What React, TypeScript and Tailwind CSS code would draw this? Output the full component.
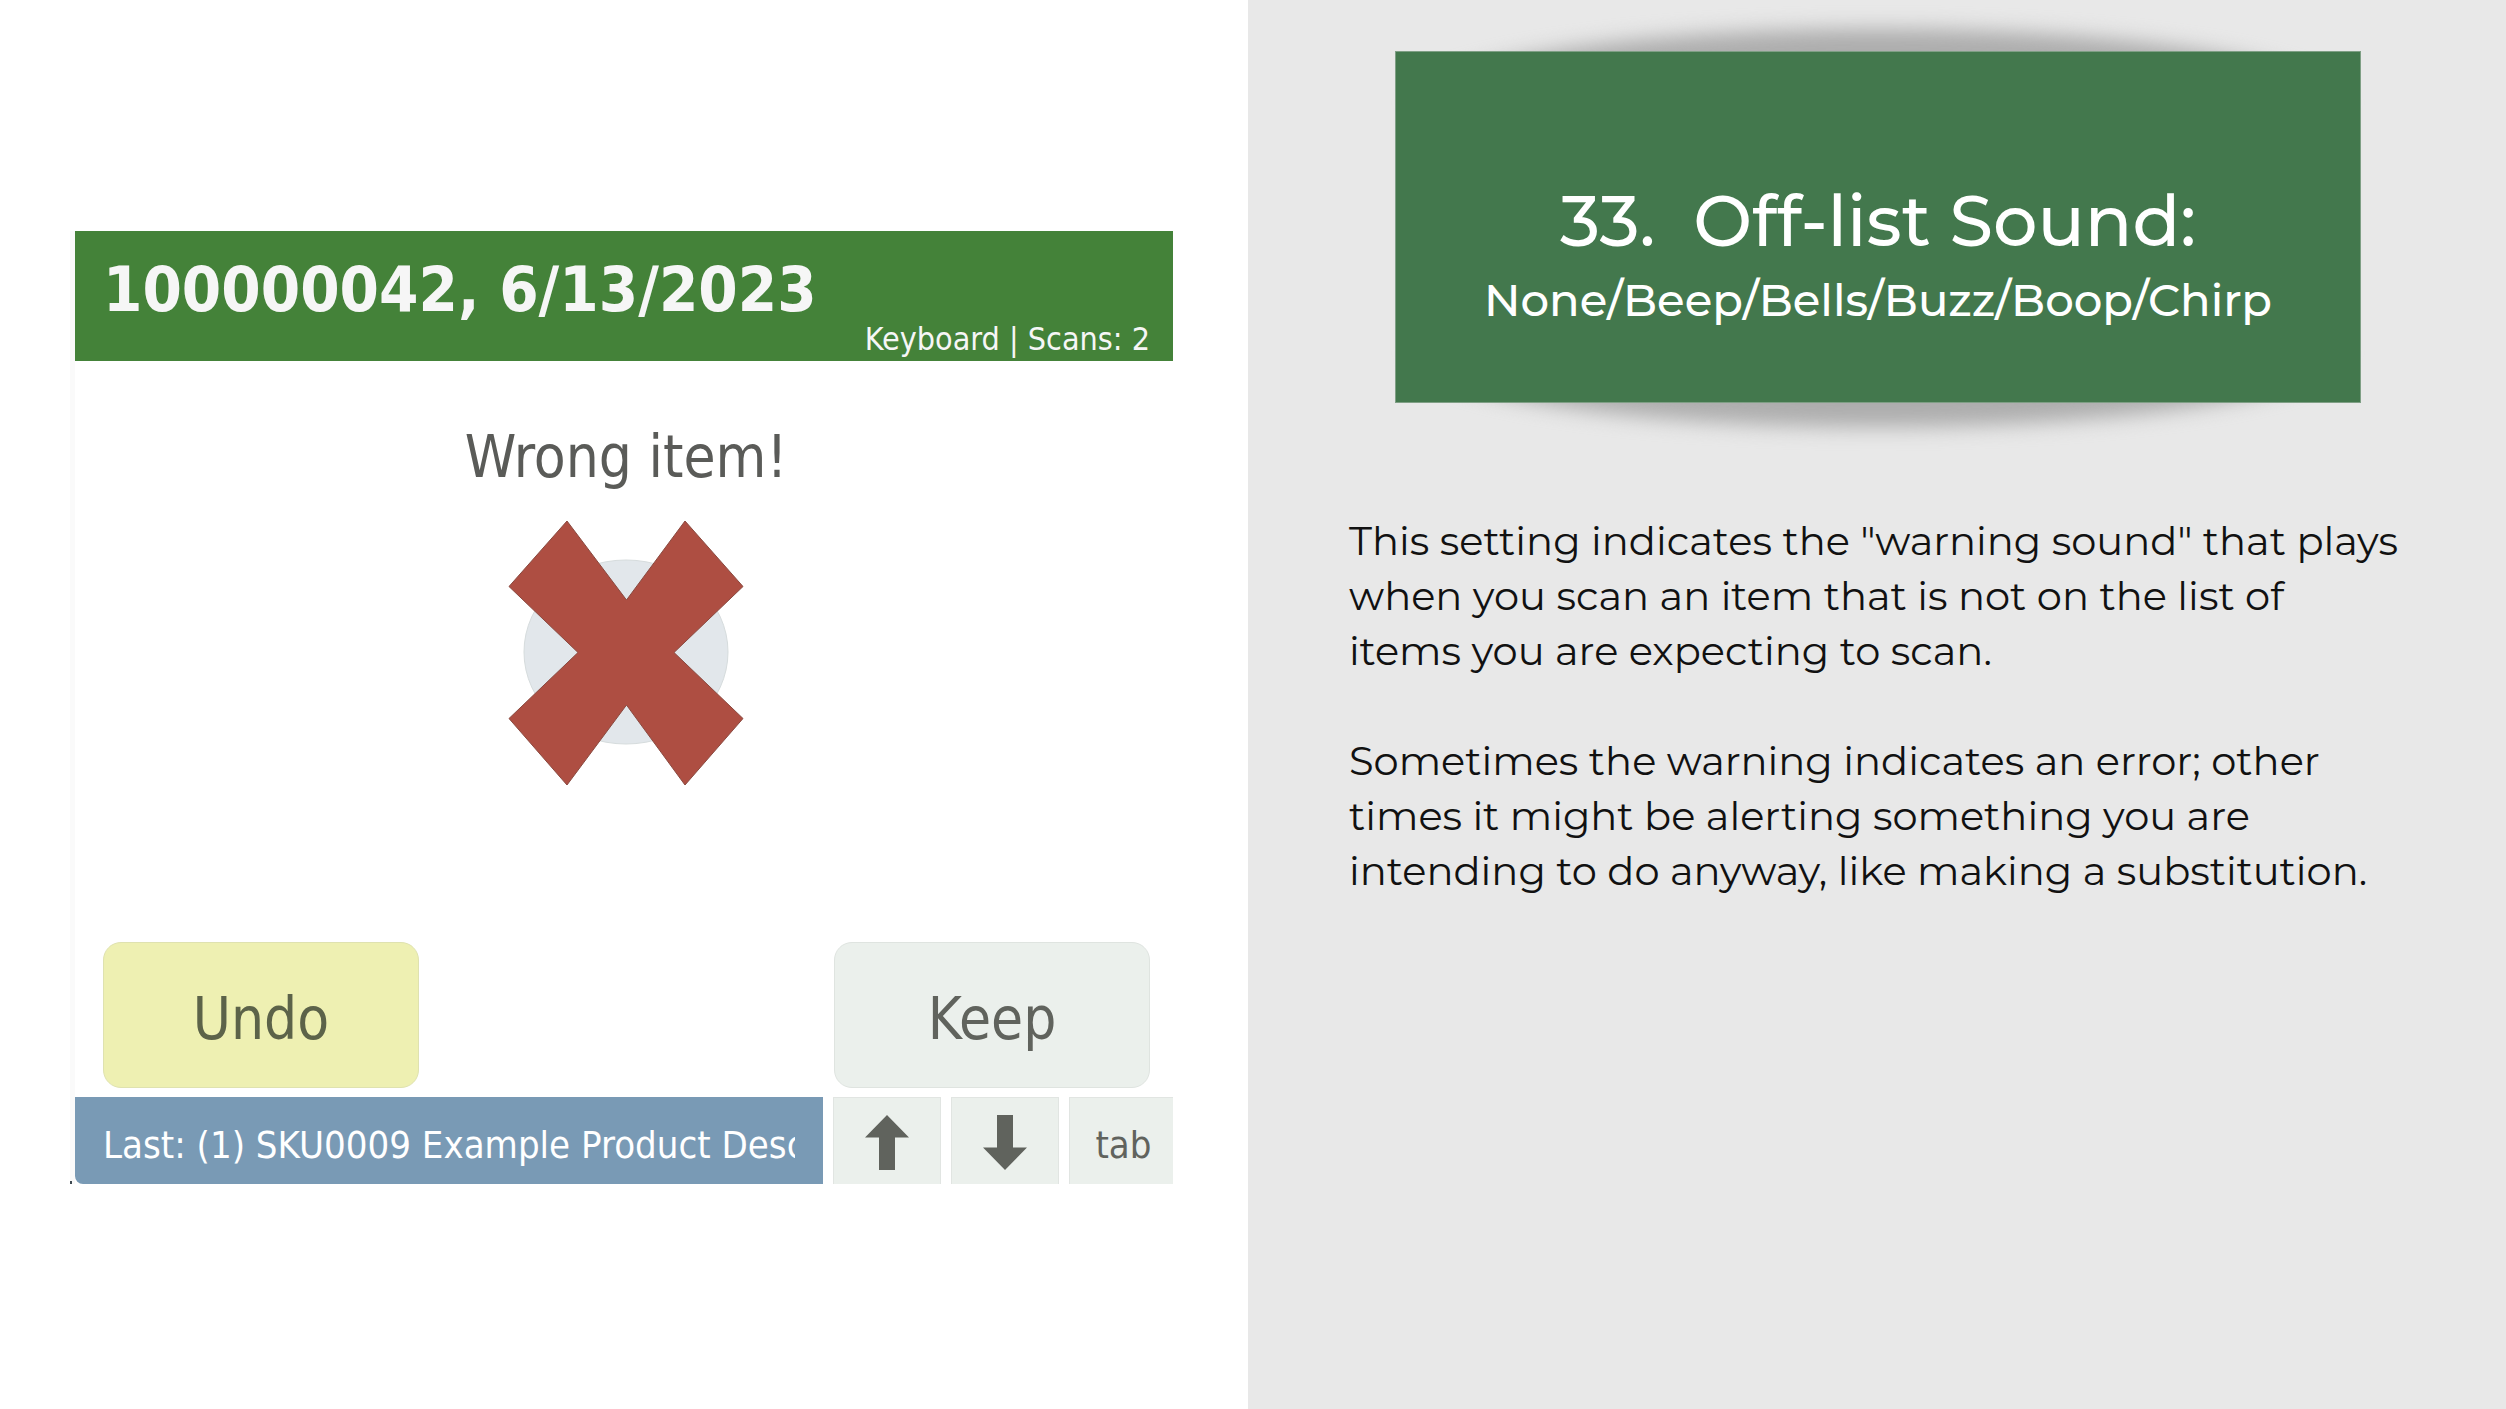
import React from 'react';

const CrossIcon = () => (
  <svg width="236" height="266" viewBox="-1 -1 236 266" aria-hidden="true">
    <ellipse cx="117" cy="131" rx="102" ry="92" fill="#e2e7eb" stroke="#d6dcdd" strokeWidth="1" />
    <polygon
      points="58,0 117.5,79 176,0 234,65.5 165,131.5 234,197.5 176,264 117.5,184 58,264 0,197.5 69,131.5 0,65.5"
      fill="#ae4e42"
      stroke="#8a4a40"
      strokeWidth="1"
    />
  </svg>
);

const ArrowIcon = ({ down = false }: { down?: boolean }) => (
  <svg
    width="44"
    height="55"
    viewBox="0 0 44 55"
    fill="#60635d"
    className={down ? 'rotate-180' : ''}
    aria-hidden="true"
  >
    <path d="M22 0 44 22.5H30V55H14V22.5H0Z" />
  </svg>
);

const keyClass =
  'flex items-center justify-center shrink-0 bg-[#ebf0ec] border border-b-0 border-[#e1e5e2] text-[#60635d]';
const actionClass =
  'w-[316px] h-[146px] pt-2 rounded-[18px] border text-[58px] leading-none';

const Scanner = () => (
  <div className="relative w-full border-l-[5px] border-[#fafafa] font-['DejaVu_Sans_Condensed','DejaVu_Sans',sans-serif]">
    <header className="bg-[#448239] text-[#f6f6f6] pt-7 pb-1.5 pl-7 pr-[23px]">
      <h1 className="text-[63px] leading-[62px] font-bold">100000042, 6/13/2023</h1>
      <p className="mt-0.5 text-[32px] leading-none text-right">Keyboard | Scans: 2</p>
    </header>

    <main className="flex flex-col items-center pt-[60px]">
      <h2 className="pl-1 text-[58px] leading-[72px] text-[#5a5b58]">Wrong item!</h2>
      <div className="mt-[27px] pl-1">
        <CrossIcon />
      </div>
      <div className="mt-[156px] w-full flex justify-between pl-7 pr-[23px]">
        <button className={`${actionClass} bg-[#eef0b2] border-[#dfe2b0] text-[#5c6349]`}>Undo</button>
        <button className={`${actionClass} bg-[#ebf0ec] border-[#dfe4e0] text-[#60635d]`}>Keep</button>
      </div>
    </main>

    <footer className="mt-[9px] flex gap-2.5 h-[87px] text-[38px] leading-none">
      <div className="flex-1 min-w-0 px-7 pt-2 flex items-center bg-[#799ab5] text-white rounded-bl-lg">
        <p className="w-full leading-[48px] overflow-hidden whitespace-nowrap">
          Last: (1) SKU0009 Example Product Desc
        </p>
      </div>
      <button className={`${keyClass} w-[108px] pt-0.5`} aria-label="Up">
        <ArrowIcon />
      </button>
      <button className={`${keyClass} w-[108px] pt-0.5`} aria-label="Down">
        <ArrowIcon down />
      </button>
      <button className={`${keyClass} w-[104px] border-r-0 pt-2 pl-1`}>tab</button>
    </footer>
    <span className="absolute -left-[5px] bottom-0 w-0.5 h-[3px] bg-[#3f4a52]" />
  </div>
);

const App = () => {
  return (
    <div className="flex min-h-screen bg-white">
      <section className="w-[49.8%] flex items-center pl-[70px] pr-[75px] pt-1.5">
        <Scanner />
      </section>

      <section className="flex-1 bg-[#e8e8e8] font-[Montserrat,'Open_Sans',sans-serif]">
        <div className="relative isolate mt-[51px] ml-[147px] mr-[145px]">
          {/* curved shadow behind the card */}
          <div className="absolute -z-10 inset-x-5 -top-[22px] -bottom-6 rounded-[50%/76px] bg-[#adadad] blur-[10px]" />
          <div className="bg-[#43784d] border border-[#7f9f85] text-white text-center font-medium pt-[134px] pb-20">
            <h2 className="text-[70px] leading-none">33.&nbsp; Off-list Sound:</h2>
            <p className="mt-[21px] text-[45px] leading-none">None/Beep/Bells/Buzz/Boop/Chirp</p>
          </div>
        </div>

        <div className="mt-[110px] pl-[101px] pr-24 space-y-[55px] text-[40px] leading-[55px] text-[#111]">
          <p>
            This setting indicates the "warning sound" that plays when you scan an item that is not on the
            list of
            <br />
            items you are expecting to scan.
          </p>
          <p>
            Sometimes the warning indicates an error; other times it might be alerting something you are
            intending to do anyway, like making a substitution.
          </p>
        </div>
      </section>
    </div>
  );
};

export default App;
